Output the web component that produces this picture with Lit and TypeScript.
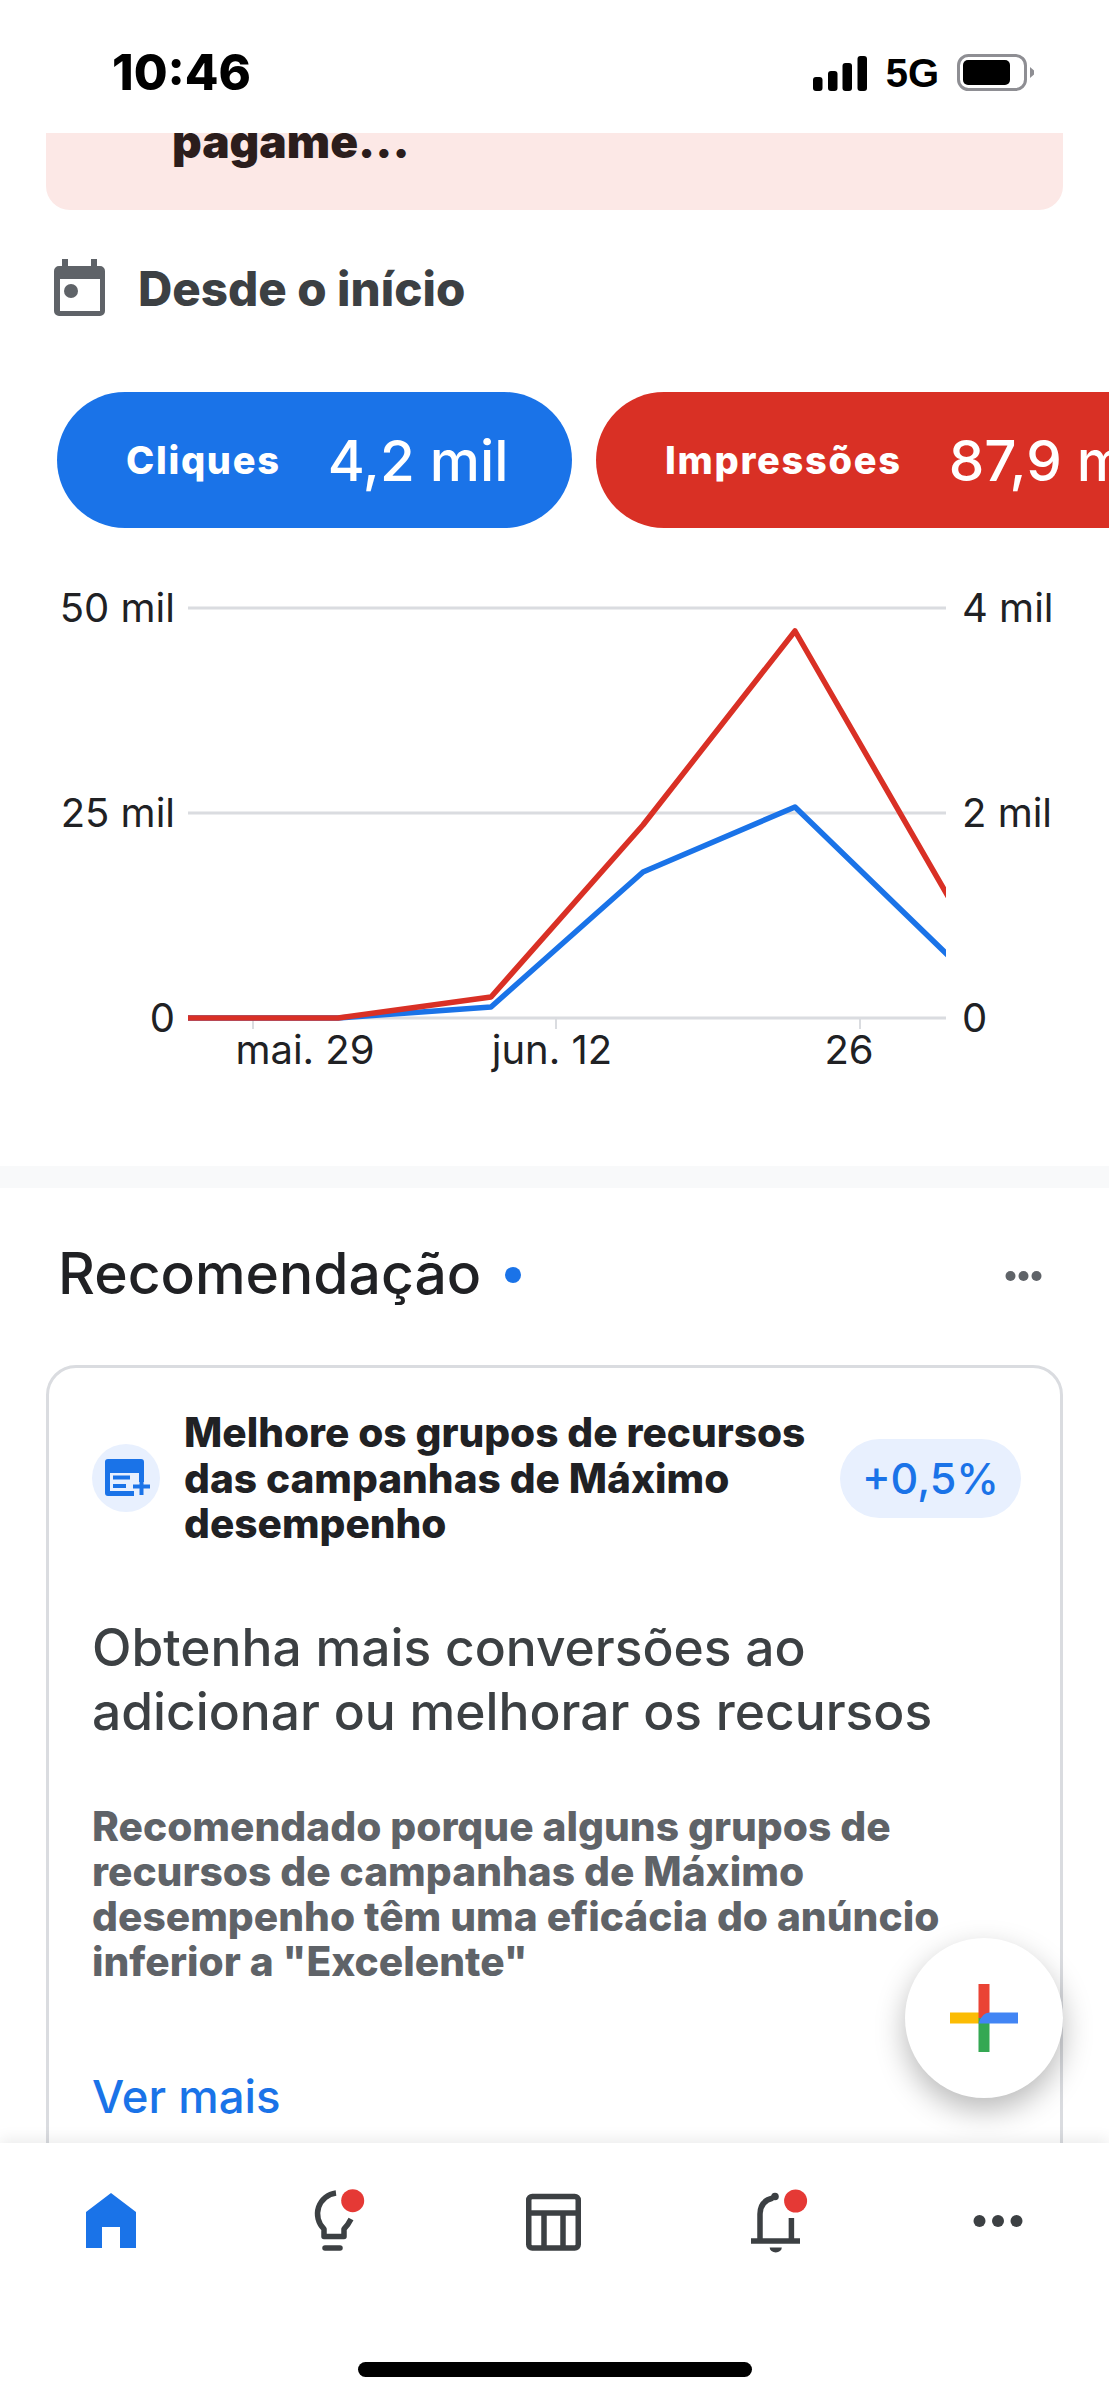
import { LitElement, html, css, svg } from "lit";
import { customElement } from "lit/decorators.js";

const RED = "#d93025";
const BLUE = "#1a73e8";

const yLabels = [
  { y: 608, l: "50 mil", r: "4 mil" },
  { y: 813, l: "25 mil", r: "2 mil" },
  { y: 1018, l: "0", r: "0" },
];
const xTicks = [253, 556, 860];
const xLabels = [
  { x: 305, t: "mai. 29" },
  { x: 552, t: "jun. 12" },
  { x: 849, t: "26" },
];
const xs = [188, 338, 491, 643, 795, 960];
const redY = [1018, 1018, 997, 825, 631, 917];
const blueY = [1018, 1018, 1007, 872, 807, 967];
const pts = (ys: number[]) => xs.map((x, i) => `${x},${ys[i]}`).join(" ");

@customElement("app-root")
export class AppRoot extends LitElement {
  static styles = css`
    :host {
      display: flex;
      flex-direction: column;
      position: relative;
      width: 1109px;
      height: 2400px;
      overflow: hidden;
      background: #fff;
      font-family: Inter, "Noto Sans", sans-serif;
      color: #202124;
    }
    svg { display: block; flex: none; }
    .status {
      height: 133px;
      flex: none;
      display: flex;
      justify-content: space-between;
      align-items: flex-start;
      padding: 0 75px 0 112px;
    }
    .time {
      font-size: 49px;
      font-weight: 800;
      line-height: 56px;
      margin-top: 45px;
      color: #000;
    }
    .sys { display: flex; align-items: center; margin-top: 55px; height: 36px; }
    .net {
      font-family: "Liberation Sans", Arial, sans-serif;
      font-size: 40px;
      font-weight: 700;
      color: #000;
      margin: 0 18px 0 19px;
      line-height: 36px;
    }
    main { flex: 1; min-height: 0; overflow: hidden; display: flex; flex-direction: column; }
    .alert {
      flex: none;
      height: 77px;
      margin: 0 46px;
      background: #fce8e6;
      border-radius: 0 0 24px 24px;
      overflow: hidden;
      display: flex;
      align-items: flex-end;
      padding: 0 0 44px 126px;
      box-sizing: border-box;
    }
    .alert span {
      font-size: 46px;
      font-weight: 900;
      line-height: 50px;
      color: #2b1d1c;
      white-space: nowrap;
    }
    .range {
      flex: none;
      display: flex;
      align-items: center;
      gap: 33px;
      height: 58px;
      margin: 48px 0 0 54px;
    }
    .range span { font-size: 47.5px; font-weight: 800; color: #3c4043; margin-top: 3px; }
    .pills {
      flex: none;
      display: flex;
      gap: 24px;
      margin: 76px 0 0 57px;
      height: 136px;
    }
    .pill {
      flex: none;
      display: flex;
      align-items: center;
      gap: 47px;
      height: 136px;
      border-radius: 68px;
      padding: 0 69px;
      color: #fff;
      white-space: nowrap;
    }
    .pill.blue { background: #1a73e8; width: 515px; box-sizing: border-box; }
    .pill.red { background: #d93025; }
    .pill b { font-size: 38px; font-weight: 800; letter-spacing: 1.7px; }
    .pill span { font-size: 56.5px; font-weight: 500; }
    .chart { margin-top: 52px; }
    .chart text {
      font-family: Inter, "Noto Sans", sans-serif;
      font-size: 40px;
      fill: #202124;
    }
    .sep { flex: none; height: 22px; background: #f8f9fa; }
    .rec-head {
      flex: none;
      height: 70px;
      margin-top: 50px;
      padding: 0 67px 0 58px;
      display: flex;
      align-items: center;
    }
    .rec-head h2 { margin: 0; font-size: 57px; font-weight: 500; color: #202124; white-space: nowrap; }
    .blip { width: 16px; height: 16px; border-radius: 50%; background: #1a73e8; margin-left: 24px; margin-top: 4px; }
    .rec-head svg { margin-left: auto; margin-top: 6px; }
    .card {
      flex: none;
      margin: 57px 46px 0 46px;
      border: 3px solid #dadce0;
      border-radius: 30px;
      padding: 42px 39px 60px 43px;
    }
    .card-top { display: flex; align-items: center; gap: 24px; }
    .ic-wrap { width: 68px; height: 68px; border-radius: 50%; background: #e8f0fe; flex: none; }
    .card-title { flex: 1; font-size: 40.6px; font-weight: 800; line-height: 45.5px; color: #202124; white-space: nowrap; }
    .badge {
      flex: none;
      width: 181px;
      height: 79px;
      border-radius: 40px;
      background: #e8f0fe;
      color: #1a73e8;
      font-size: 43px;
      font-weight: 500;
      display: flex;
      align-items: center;
      justify-content: center;
    }
    .headline { margin: 68px 0 0; font-size: 51.5px; font-weight: 500; line-height: 64px; color: #3c4043; white-space: nowrap; }
    .why { margin: 61px 0 0; font-size: 40.7px; font-weight: 800; line-height: 45.3px; color: #5f6368; white-space: nowrap; }
    .more { margin-top: 82px; font-size: 45.5px; font-weight: 500; line-height: 60px; color: #1a73e8; }
    .fab {
      position: absolute;
      left: 905px;
      top: 1938px;
      width: 158px;
      height: 160px;
      border-radius: 50%;
      background: #fff;
      box-shadow: 0 12px 30px rgba(0, 0, 0, 0.28);
      display: flex;
      align-items: center;
      justify-content: center;
    }
    nav {
      flex: none;
      position: relative;
      height: 257px;
      background: #fff;
      box-shadow: 0 -4px 14px rgba(0, 0, 0, 0.08);
      display: grid;
      grid-template-columns: repeat(5, 1fr);
      justify-items: center;
      align-content: start;
      padding: 37px 0 0 0;
      box-sizing: border-box;
    }
    .home-bar {
      position: absolute;
      left: 358px;
      top: 219px;
      width: 394px;
      height: 15px;
      border-radius: 8px;
      background: #000;
    }
  `;

  private chart() {
    return html`<svg class="chart" width="1109" height="586" viewBox="0 580 1109 586">
      <defs>
        <clipPath id="plot"><rect x="180" y="580" width="766" height="460" /></clipPath>
      </defs>
      ${yLabels.map(
        (r) => svg`
          <line x1="188" x2="946" y1=${r.y} y2=${r.y} stroke="#dadce0" stroke-width="3" />
          <text x="175" y=${r.y + 14} text-anchor="end">${r.l}</text>
          <text x="962" y=${r.y + 14}>${r.r}</text>`
      )}
      ${xTicks.map((x) => svg`<line x1=${x} x2=${x} y1="1018" y2="1029" stroke="#dadce0" stroke-width="2" />`)}
      ${xLabels.map((l) => svg`<text x=${l.x} y="1064" text-anchor="middle">${l.t}</text>`)}
      <g clip-path="url(#plot)">
        <polyline points=${pts(blueY)} fill="none" stroke=${BLUE} stroke-width="5.5" stroke-linejoin="round" />
        <polyline points=${pts(redY)} fill="none" stroke=${RED} stroke-width="5.5" stroke-linejoin="round" />
      </g>
    </svg>`;
  }

  render() {
    return html`
      <div class="status">
        <div class="time">10:46</div>
        <div class="sys">
          <svg width="54" height="36" viewBox="0 0 54 36" fill="#000">
            <rect x="0" y="22" width="9.5" height="14" rx="3" />
            <rect x="15" y="16" width="9.5" height="20" rx="3" />
            <rect x="29.5" y="8" width="9.5" height="28" rx="3" />
            <rect x="44.5" y="1" width="9.5" height="35" rx="3" />
          </svg>
          <span class="net">5G</span>
          <svg width="77" height="38" viewBox="0 0 77 38">
            <rect x="1.5" y="1.5" width="67" height="34" rx="10" fill="none" stroke="#8e8e93" stroke-width="3" />
            <rect x="6" y="6" width="47" height="25" rx="5" fill="#000" />
            <path d="M73 13 L77 16.5 V20.5 L73 24 Z" fill="#8e8e93" />
          </svg>
        </div>
      </div>

      <main>
        <div class="alert"><span>pagame...</span></div>

        <div class="range">
          <svg width="51" height="57" viewBox="0 0 51 57">
            <path
              fill="#5f6368"
              fill-rule="evenodd"
              d="M8 0h6v7h23V0h6v7h3a5 5 0 0 1 5 5v40a5 5 0 0 1-5 5H5a5 5 0 0 1-5-5V12a5 5 0 0 1 5-5h3zM6 20v32h40V20z"
            />
            <circle cx="17" cy="32" r="7" fill="#5f6368" />
          </svg>
          <span>Desde o início</span>
        </div>

        <div class="pills">
          <div class="pill blue"><b>Cliques</b><span>4,2 mil</span></div>
          <div class="pill red"><b>Impressões</b><span>87,9 mil</span></div>
        </div>

        ${this.chart()}
        <div class="sep"></div>

        <div class="rec-head">
          <h2>Recomendação</h2>
          <div class="blip"></div>
          <svg width="37" height="12" viewBox="0 0 37 12" fill="#5f6368">
            <circle cx="5.5" cy="6" r="5" /><circle cx="18.5" cy="6" r="5" /><circle cx="31.5" cy="6" r="5" />
          </svg>
        </div>

        <div class="card">
          <div class="card-top">
            <div class="ic-wrap">
              <svg width="68" height="68" viewBox="0 0 68 68">
                <path
                  fill="#1a73e8"
                  d="M16 15h33a3 3 0 0 1 3 3v20h-5V29H18v18h24v5H16a3 3 0 0 1-3-3V18a3 3 0 0 1 3-3z"
                />
                <path d="M21 33.5h17M21 42h13M41 42.5h17M49.5 34v17" stroke="#1a73e8" stroke-width="4" fill="none" />
              </svg>
            </div>
            <div class="card-title">Melhore os grupos de recursos<br />das campanhas de Máximo<br />desempenho</div>
            <div class="badge">+0,5%</div>
          </div>
          <p class="headline">Obtenha mais conversões ao<br />adicionar ou melhorar os recursos</p>
          <p class="why">
            Recomendado porque alguns grupos de<br />recursos de campanhas de Máximo<br />desempenho têm uma
            eficácia do anúncio<br />inferior a "Excelente"
          </p>
          <div class="more">Ver mais</div>
        </div>
      </main>

      <nav>
        <svg width="80" height="80" viewBox="0 0 80 80">
          <path fill="#1a73e8" d="M40 13 L65 32 V68 H49 V47 H31 V68 H15 V32 Z" />
        </svg>
        <svg width="80" height="80" viewBox="0 0 80 80" fill="none" stroke="#3c4043" stroke-width="5.5">
          <path d="M43 13 A21 21 0 0 0 31 49 V56.5 H51 V49 Q55 45 58 39" stroke-linejoin="round" />
          <path d="M32 68 H47" stroke-linecap="round" />
          <circle cx="59.7" cy="20.7" r="11.5" fill="#e53935" stroke="none" />
        </svg>
        <svg width="80" height="80" viewBox="0 0 80 80" fill="none" stroke="#3c4043" stroke-width="5.5">
          <rect x="14.75" y="16.5" width="49.5" height="51.5" rx="3.5" />
          <path d="M15 33 H64 M30 33 V68 M49 33 V68" />
        </svg>
        <svg width="80" height="80" viewBox="0 0 80 80" fill="none" stroke="#3c4043" stroke-width="5.5">
          <path d="M15 61 H64" />
          <path d="M24 60 V34 Q24 21 37 18" />
          <path d="M55.4 38 V60" />
          <circle cx="39" cy="16.5" r="3.8" fill="#3c4043" stroke="none" />
          <path d="M33.7 67.5 H45.8 A6 5 0 0 1 33.7 67.5 Z" fill="#3c4043" stroke="none" />
          <circle cx="59.6" cy="21" r="11.5" fill="#e53935" stroke="none" />
        </svg>
        <svg width="80" height="80" viewBox="0 0 80 80" fill="#3c4043">
          <circle cx="21.5" cy="41" r="6" /><circle cx="40" cy="41" r="6" /><circle cx="58.5" cy="41" r="6" />
        </svg>
        <div class="home-bar"></div>
      </nav>

      <div class="fab">
        <svg width="68" height="68" viewBox="0 0 68 68">
          <rect x="0" y="28.5" width="30" height="11" fill="#fbbc04" />
          <rect x="28.5" y="34" width="11" height="34" fill="#34a853" />
          <rect x="28.5" y="0" width="11" height="34" fill="#ea4335" />
          <path d="M28.5 39.5 Q32 28.5 39.5 28.5 H68 V39.5 Z" fill="#4285f4" />
        </svg>
      </div>
    `;
  }
}
